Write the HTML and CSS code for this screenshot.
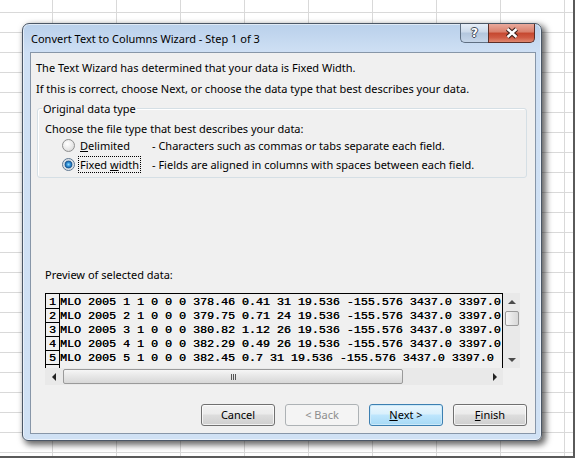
FILE: index.html
```html
<!DOCTYPE html>
<html lang="en">
<head>
  <meta charset="UTF-8">
  <title>Convert Text to Columns Wizard - Step 1 of 3</title>
  <link rel="stylesheet" href="styles.css">
</head>
<body>
  <div class="sheet">
    <div class="dialog">
      <div class="titlebar">
        <span class="title">Convert Text to Columns Wizard - Step 1 of 3</span>
        <div class="caption-buttons">
          <span class="cap-btn help">?</span>
          <span class="cap-btn close">
            <svg width="14" height="12" viewBox="0 0 14 12">
              <path d="M2.5 2 L11.5 10 M11.5 2 L2.5 10" stroke="#3a1e19" stroke-width="4.6" fill="none"/>
              <path d="M2.5 2 L11.5 10 M11.5 2 L2.5 10" stroke="#fff" stroke-width="2.4" fill="none"/>
            </svg>
          </span>
        </div>
      </div>

      <div class="panel">
        <p class="intro">The Text Wizard has determined that your data is Fixed Width.</p>
        <p class="intro second">If this is correct, choose Next, or choose the data type that best describes your data.</p>

        <fieldset class="group">
          <legend>Original data type</legend>
          <div class="group-caption">Choose the file type that best describes your data:</div>
          <div class="option">
            <span class="radio"></span>
            <span class="option-label"><span class="focus-box"><u>D</u>elimited</span></span>
            <span class="option-desc">- Characters such as commas or tabs separate each field.</span>
          </div>
          <div class="option">
            <span class="radio checked"></span>
            <span class="option-label"><span class="focus-box focused">Fixed <u>w</u>idth</span></span>
            <span class="option-desc">- Fields are aligned in columns with spaces between each field.</span>
          </div>
        </fieldset>

        <div class="preview-label">Preview of selected data:</div>
        <div class="preview">
          <div class="data">
            <div class="row"><span class="num">1</span><span class="line">MLO 2005 1 1 0 0 0 378.46 0.41 31 19.536 -155.576 3437.0 3397.0</span></div>
            <div class="row"><span class="num">2</span><span class="line">MLO 2005 2 1 0 0 0 379.75 0.71 24 19.536 -155.576 3437.0 3397.0</span></div>
            <div class="row"><span class="num">3</span><span class="line">MLO 2005 3 1 0 0 0 380.82 1.12 26 19.536 -155.576 3437.0 3397.0</span></div>
            <div class="row"><span class="num">4</span><span class="line">MLO 2005 4 1 0 0 0 382.29 0.49 26 19.536 -155.576 3437.0 3397.0</span></div>
            <div class="row"><span class="num">5</span><span class="line">MLO 2005 5 1 0 0 0 382.45 0.7 31 19.536 -155.576 3437.0 3397.0</span></div>
            <div class="row"><span class="num"></span><span class="line"></span></div>
          </div>
          <div class="vscroll">
            <span class="scroll-btn"><span class="arrow up"></span></span>
            <span class="thumb-v"></span>
            <span class="spacer"></span>
            <span class="scroll-btn"><span class="arrow down"></span></span>
          </div>
          <div class="hscroll">
            <span class="scroll-btn"><span class="arrow left"></span></span>
            <span class="thumb-h"><span class="grip"></span></span>
            <span class="spacer"></span>
            <span class="scroll-btn"><span class="arrow right"></span></span>
          </div>
          <div class="corner"></div>
        </div>

        <div class="actions">
          <button class="btn">Cancel</button>
          <button class="btn disabled">&lt; <u>B</u>ack</button>
          <button class="btn default"><u>N</u>ext &gt;</button>
          <button class="btn"><u>F</u>inish</button>
        </div>
      </div>
    </div>
  </div>
</body>
</html>
```

FILE: styles.css
```css
body {
  margin: 0;
  background: #fff;
  font-family: 'Noto Sans', sans-serif;
  font-size: 11px;
  line-height: 15px;
  color: #000;
}

/* spreadsheet behind the dialog */
.sheet {
  width: 575px;
  height: 458px;
  box-sizing: border-box;
  padding: 23px 0 0 22px;
  border-right: 2px solid #5a5a5a;
  border-bottom: 2px solid #5a5a5a;
  background-color: #fff;
  background-image:
    linear-gradient(to right, #d9d9d9 1px, transparent 1px),
    linear-gradient(#d9d9d9 1px, transparent 1px);
  background-size: 64px 20px;
  background-position: 52px 12px;
}

.dialog {
  width: 520px;
  height: 418px;
  box-sizing: border-box;
  padding: 0 5px 6px 7px;
  border: 1px solid #4b5766;
  border-radius: 7px 7px 6px 6px;
  background: linear-gradient(#b9d0eb, #cfe0f4 29px, #d0e1f4);
  box-shadow: inset 0 0 0 1px rgba(255, 255, 255, 0.55), 3px 3px 6px 1px rgba(0, 0, 0, 0.6);
  display: flex;
  flex-direction: column;
}

.titlebar {
  height: 28px;
  display: flex;
  justify-content: space-between;
  align-items: flex-start;
}

.title {
  padding: 6.5px 0 0 1px;
}

.caption-buttons {
  display: flex;
  margin-right: 1px;
}

.cap-btn {
  height: 19px;
  box-sizing: border-box;
  display: flex;
  align-items: center;
  justify-content: center;
}

.help {
  width: 28px;
  border: 1px solid #5f6f82;
  border-top: none;
  border-right: none;
  border-radius: 0 0 0 5px;
  background: linear-gradient(#e6eef8, #cbd9ea 45%, #b3c6dd 50%, #c6d6e9);
  color: #fff;
  font: bold 12px 'DejaVu Sans', sans-serif;
  text-shadow: 1px 0 0 #3d4a58, -1px 0 0 #3d4a58, 0 1px 0 #3d4a58, 0 -1px 0 #3d4a58;
}

.close {
  width: 47px;
  border: 1px solid #5c2d26;
  border-top: none;
  border-radius: 0 0 5px 0;
  background: linear-gradient(#e9a99c, #d97f6b 45%, #c5472f 50%, #cf5a43 75%, #e0886f);
}

.panel {
  flex: 1;
  background: #f0f0f0;
  border: 1px solid #8796a8;
  display: flex;
  flex-direction: column;
}

.intro {
  margin: 7px 0 0 5px;
}

.intro.second {
  margin-top: 6px;
}

.group {
  width: 490px;
  box-sizing: border-box;
  margin: 5px 0 0 6px;
  padding: 5px 7px 3px;
  border: 1px solid #d5dfe5;
  border-radius: 3px;
  box-shadow: inset 1px 1px 0 #fff;
}

.group legend {
  margin-left: -3px;
  padding: 0 1px;
}

.option {
  display: flex;
  align-items: center;
  height: 19px;
  padding-left: 17px;
}

.radio {
  width: 13px;
  height: 13px;
  box-sizing: border-box;
  border: 1px solid #8e8f8f;
  border-radius: 50%;
  background: radial-gradient(circle at 40% 35%, #fff, #e8e8e8 55%, #cfcfcf);
}

.radio.checked {
  border-color: #5e7791;
  background: radial-gradient(circle, #8fdcff 0, #2e8cd2 2px, #17548f 3.5px, #c9d3dc 4.2px, #f4f4f4 6px);
}

.option-label {
  width: 74px;
  margin-left: 3px;
}

.focus-box {
  display: inline-block;
  padding: 0 1px;
  border: 1px dotted transparent;
}

.focus-box.focused {
  border-color: #000;
}

.preview-label {
  margin: 89px 0 0 14px;
}

.preview {
  margin: 11px 0 0 14px;
  display: grid;
  grid-template-columns: 458px 17px;
  grid-template-rows: 75px 17px;
}

.data {
  border: 1px solid #000;
  border-bottom: none;
  padding-top: 1px;
  overflow: hidden;
  font: 11.67px/12px 'Liberation Mono', monospace;
  color: #000;
  text-shadow: 0.3px 0 0 #000;
  background-image: linear-gradient(to right, transparent 13px, #000 13px, #000 14px, transparent 14px);
}

.row {
  display: flex;
  height: 14px;
}

.num {
  flex-shrink: 0;
  width: 14px;
  height: 14px;
  box-sizing: border-box;
  padding: 1px 1px 0 0;
  border-bottom: 1px solid #000;
  text-align: center;
}

.line {
  padding-top: 1px;
  white-space: pre;
}

.vscroll,
.hscroll {
  display: flex;
  background: #e9e9e9;
}

.vscroll {
  flex-direction: column;
  align-items: center;
}

.hscroll {
  align-items: center;
}

.scroll-btn {
  width: 17px;
  height: 17px;
  flex-shrink: 0;
  display: flex;
  align-items: center;
  justify-content: center;
}

.spacer {
  flex: 1;
}

.arrow {
  width: 0;
  height: 0;
  border: 4px solid transparent;
}

.arrow.up { border-bottom-color: #4a4a4a; border-top-width: 0; }
.arrow.down { border-top-color: #4a4a4a; border-bottom-width: 0; }
.arrow.left { border-right-color: #222; border-left-width: 0; }
.arrow.right { border-left-color: #222; border-right-width: 0; }

.thumb-v {
  width: 14px;
  height: 15px;
  margin-top: 1px;
  box-sizing: border-box;
  border: 1px solid #9a9a9a;
  border-radius: 2px;
  background: linear-gradient(to right, #f6f6f6, #e6e6e6 50%, #d8d8d8);
}

.thumb-h {
  width: 340px;
  height: 15px;
  margin-left: 1px;
  box-sizing: border-box;
  border: 1px solid #9a9a9a;
  border-radius: 2px;
  background: linear-gradient(#f6f6f6, #e6e6e6 50%, #d8d8d8);
  display: flex;
  align-items: center;
  justify-content: center;
}

.grip {
  width: 5px;
  height: 6px;
  background: repeating-linear-gradient(to right, #555 0 1px, transparent 1px 2px);
}

.corner {
  background: #f0f0f0;
}

.actions {
  display: flex;
  justify-content: flex-end;
  gap: 10px;
  margin: 19px 8px 0 0;
}

.btn {
  width: 74px;
  height: 22px;
  padding: 0 0 1px;
  box-sizing: border-box;
  border: 1px solid #707070;
  border-radius: 3px;
  background: linear-gradient(#f2f2f2, #ebebeb 45%, #dddddd 50%, #cfcfcf);
  box-shadow: inset 0 0 0 1px rgba(255, 255, 255, 0.7);
  font-family: 'Noto Sans', sans-serif;
  font-size: 11px;
  line-height: 19px;
  color: #000;
}

.btn.disabled {
  border-color: #adb2b5;
  background: #f4f4f4;
  box-shadow: none;
  color: #8d8d8d;
}

.btn.disabled u {
  text-decoration: none;
}

.btn.default {
  border-color: #3c7fb1;
  background: linear-gradient(#eaf6fd, #d9f0fc 45%, #bee6fd 50%, #a7d9f5);
  box-shadow: inset 0 0 0 1px #cbe9f9;
}
```
